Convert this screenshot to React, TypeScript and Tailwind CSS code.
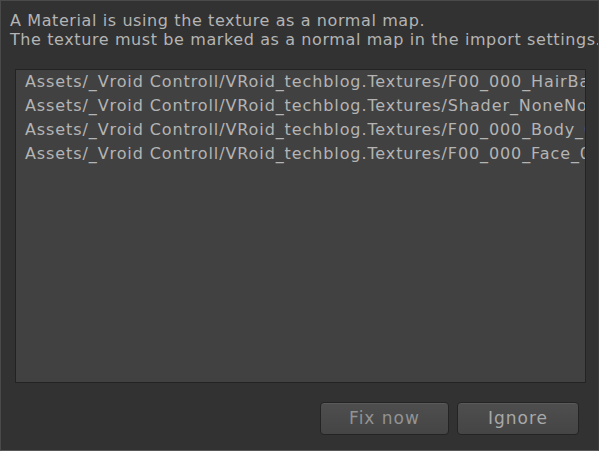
import React from "react";

const paths = [
  "Assets/_Vroid Controll/VRoid_techblog.Textures/F00_000_HairBack_00_nml.png",
  "Assets/_Vroid Controll/VRoid_techblog.Textures/Shader_NoneNormal.png",
  "Assets/_Vroid Controll/VRoid_techblog.Textures/F00_000_Body_00_nml.png",
  "Assets/_Vroid Controll/VRoid_techblog.Textures/F00_000_Face_00_nml.png",
];

export default function App() {
  return (
    <div
      className="w-[599px] h-[451px] overflow-hidden bg-[#323232] border border-[#4a4a4a] border-r-[#3c3c3c] border-b-[#585858] flex flex-col text-[#b4b4b4]"
      style={{ fontFamily: '"DejaVu Sans", Verdana, sans-serif' }}
    >
      <div className="pl-[9px] pt-[10px] text-[16px] leading-[19px] tracking-[0.6px] whitespace-nowrap">
        <div>A Material is using the texture as a normal map.</div>
        <div>The texture must be marked as a normal map in the import settings.</div>
      </div>

      <div className="ml-[14px] mr-[12px] mt-[20px] h-[314px] bg-[#414141] border border-[#232323] overflow-hidden">
        {paths.map((p, i) => (
          <div key={i} className="pl-[9px] h-[24px] leading-[24px] text-[16px] tracking-[0.9px] whitespace-nowrap">
            {p}
          </div>
        ))}
      </div>

      <div className="flex justify-end gap-[8px] mt-[19px] pr-[19px]">
        <button className="w-[129px] h-[33px] rounded-[4px] border border-[#242424] bg-gradient-to-b from-[#4e4e4e] to-[#454545] text-[17px] tracking-[1px] text-[#939393] shadow-[inset_0_1px_0_#5a5a5a]">
          Fix now
        </button>
        <button className="w-[122px] h-[33px] rounded-[4px] border border-[#242424] bg-gradient-to-b from-[#4e4e4e] to-[#454545] text-[17px] tracking-[1px] text-[#a8a8a8] shadow-[inset_0_1px_0_#5a5a5a]">
          Ignore
        </button>
      </div>
    </div>
  );
}
